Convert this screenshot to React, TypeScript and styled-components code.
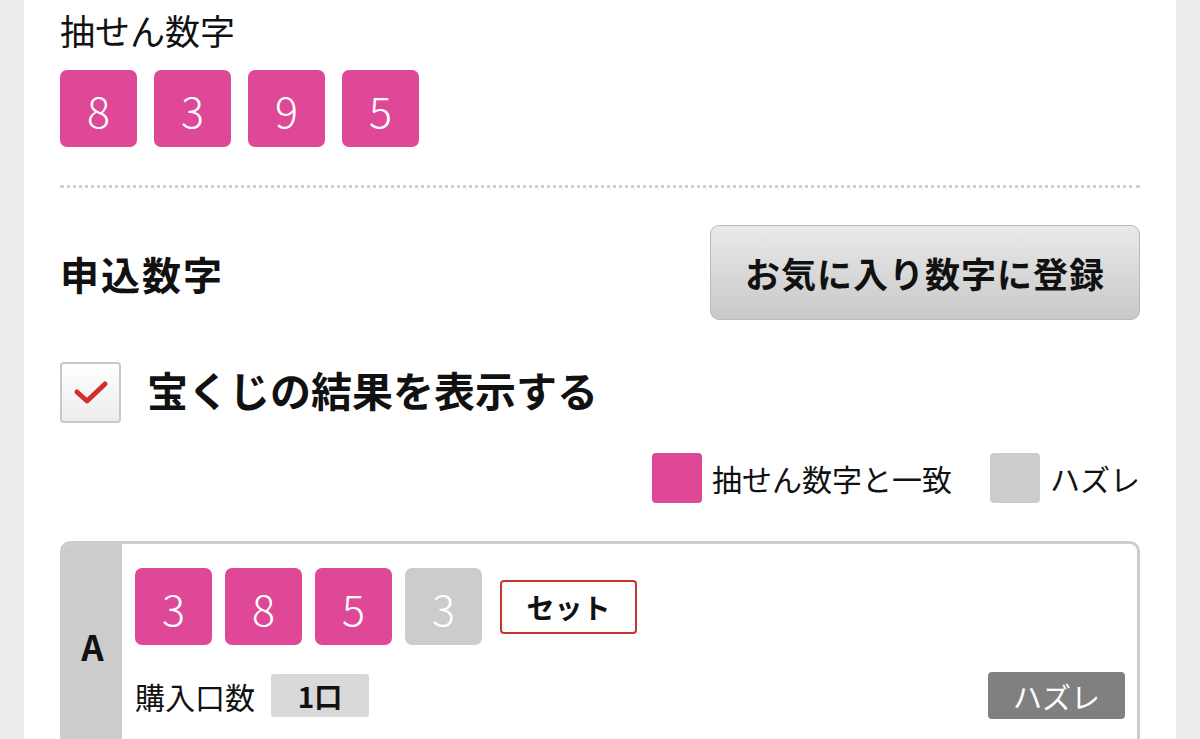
import React from 'react';
import styled, { createGlobalStyle } from 'styled-components';

const PINK = '#de4897';
const MISS = '#cccccc';

const GlobalStyle = createGlobalStyle`
  html, body {
    margin: 0;
    padding: 0;
    background: #ececec;
    font-family: "Noto Sans CJK JP", "Noto Sans", sans-serif;
    color: #111;
  }
`;

const Page = styled.div`
  margin: 0 24px;
  min-height: 739px;
  background: #fff;
  padding: 10px 36px 40px;
  box-sizing: border-box;
`;

const DrawTitle = styled.h2`
  margin: 0;
  font-size: 35px;
  line-height: 40px;
  font-weight: 400;
`;

const NumberRow = styled.div<{ $gap: number }>`
  display: flex;
  align-items: center;
  gap: ${({ $gap }) => `${$gap}px`};
`;

const DrawRow = styled(NumberRow)`
  margin-top: 20px;
`;

const NumberBox = styled.div<{ $hit: boolean }>`
  width: 77px;
  height: 77px;
  border-radius: 7px;
  background: ${({ $hit }) => ($hit ? PINK : MISS)};
  color: #fff;
  display: flex;
  align-items: center;
  justify-content: center;
  font-size: 43px;
  font-weight: 300;
`;

const Divider = styled.hr`
  margin: 38px 0 0;
  border: none;
  border-top: 3px dotted #cfcfcf;
`;

const HeaderRow = styled.div`
  margin-top: 37px;
  display: flex;
  align-items: center;
  justify-content: space-between;
`;

const SectionTitle = styled.h2`
  margin: 0;
  font-size: 39px;
  letter-spacing: 2px;
  font-weight: 700;
`;

const FavButton = styled.button`
  width: 430px;
  height: 95px;
  border: 1px solid #b9b9b9;
  border-radius: 9px;
  background: linear-gradient(#e9e9e9, #c9c9c9);
  font-family: inherit;
  font-size: 35px;
  letter-spacing: 1px;
  font-weight: 700;
  color: #111;
  padding: 0;
`;

const CheckRow = styled.label`
  margin-top: 42px;
  display: flex;
  align-items: center;
  gap: 26px;
`;

const CheckBox = styled.span`
  width: 57px;
  height: 57px;
  border: 2px solid #c8c8c8;
  border-radius: 4px;
  background: linear-gradient(#ffffff, #ececec);
  display: flex;
  align-items: center;
  justify-content: center;
`;

const CheckLabel = styled.span`
  font-size: 41px;
  line-height: 41px;
  font-weight: 700;
  margin-bottom: 6px;
`;

const Legend = styled.div`
  margin-top: 30px;
  display: flex;
  justify-content: flex-end;
  align-items: center;
  gap: 38px;
`;

const LegendItem = styled.div`
  display: flex;
  align-items: center;
  gap: 10px;
  font-size: 30px;
  line-height: 50px;
`;

const Swatch = styled.span<{ $color: string }>`
  width: 50px;
  height: 50px;
  border-radius: 4px;
  background: ${({ $color }) => $color};
`;

const Card = styled.div`
  margin-top: 38px;
  display: flex;
  border: 3px solid #cccccc;
  border-radius: 10px;
  overflow: hidden;
`;

const CardLabel = styled.div`
  width: 59px;
  background: #cccccc;
  display: flex;
  align-items: center;
  justify-content: center;
  font-size: 35px;
  font-weight: 700;
`;

const CardBody = styled.div`
  flex: 1;
  padding: 24px 12px 28px 13px;
`;

const SetButton = styled.span`
  margin-left: 5px;
  width: 133px;
  height: 50px;
  border: 2px solid #c8342e;
  border-radius: 4px;
  display: flex;
  align-items: center;
  justify-content: center;
  font-size: 28px;
  font-weight: 700;
`;

const InfoRow = styled.div`
  margin-top: 27px;
  display: flex;
  align-items: center;
`;

const InfoLabel = styled.span`
  font-size: 30px;
`;

const CountBadge = styled.span`
  margin-left: 16px;
  width: 98px;
  height: 43px;
  background: #d9d9d9;
  border-radius: 3px;
  display: flex;
  align-items: center;
  justify-content: center;
  font-size: 28px;
  font-weight: 700;
`;

const ResultBadge = styled.span`
  margin-left: auto;
  width: 137px;
  height: 47px;
  background: #808080;
  border-radius: 4px;
  color: #fff;
  display: flex;
  align-items: center;
  justify-content: center;
  font-size: 29px;
`;

const drawn = [8, 3, 9, 5];
const entry = [3, 8, 5, 3];
// the last digit of the entry is the only one that misses
const entryHits = [true, true, true, false];

export default function App() {
  return (
    <>
      <GlobalStyle />
      <Page>
        <DrawTitle>抽せん数字</DrawTitle>
        <DrawRow $gap={17}>
          {drawn.map((n, i) => (
            <NumberBox key={`d-${i}`} $hit>
              {n}
            </NumberBox>
          ))}
        </DrawRow>

        <Divider />

        <HeaderRow>
          <SectionTitle>申込数字</SectionTitle>
          <FavButton>お気に入り数字に登録</FavButton>
        </HeaderRow>

        <CheckRow>
          <CheckBox>
            <svg width="36" height="26" viewBox="0 0 36 26">
              <path
                d="M4 12 L14 21 L32 4"
                fill="none"
                stroke="#d0312d"
                strokeWidth="5"
                strokeLinecap="round"
                strokeLinejoin="round"
              />
            </svg>
          </CheckBox>
          <CheckLabel>宝くじの結果を表示する</CheckLabel>
        </CheckRow>

        <Legend>
          <LegendItem>
            <Swatch $color={PINK} />
            抽せん数字と一致
          </LegendItem>
          <LegendItem>
            <Swatch $color={MISS} />
            ハズレ
          </LegendItem>
        </Legend>

        <Card>
          <CardLabel>A</CardLabel>
          <CardBody>
            <NumberRow $gap={13}>
              {entry.map((n, i) => (
                <NumberBox key={`e-${i}`} $hit={entryHits[i]}>
                  {n}
                </NumberBox>
              ))}
              <SetButton>セット</SetButton>
            </NumberRow>
            <InfoRow>
              <InfoLabel>購入口数</InfoLabel>
              <CountBadge>1口</CountBadge>
              <ResultBadge>ハズレ</ResultBadge>
            </InfoRow>
          </CardBody>
        </Card>
      </Page>
    </>
  );
}
